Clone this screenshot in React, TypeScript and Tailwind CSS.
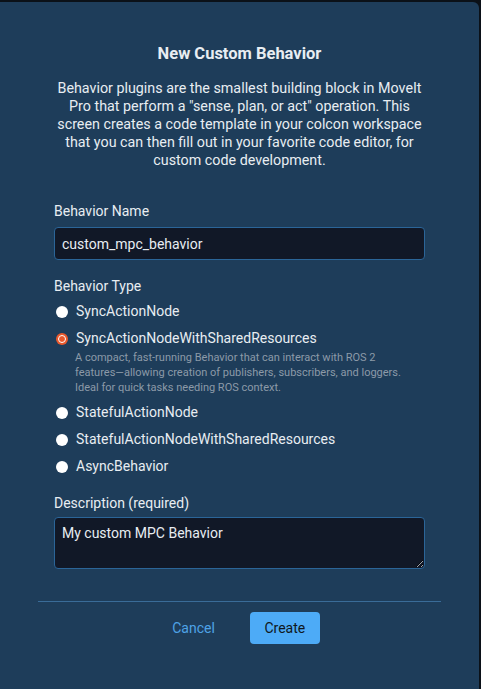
import { useState } from "react";

const TYPES = [
  "SyncActionNode",
  "SyncActionNodeWithSharedResources",
  "StatefulActionNode",
  "StatefulActionNodeWithSharedResources",
  "AsyncBehavior",
];

export default function App() {
  const [selected, setSelected] = useState(TYPES[1]);
  const [name, setName] = useState("custom_mpc_behavior");
  const [desc, setDesc] = useState("My custom MPC Behavior");

  return (
    <div
      className="min-h-[689px] bg-[#0b1118] pt-[2px] pr-[2px]"
      style={{ fontFamily: "Roboto, 'Liberation Sans', sans-serif" }}
    >
      <div className="min-h-[687px] bg-[#1e3d5a] rounded-tr-md text-[#e8edf2]">
        <div className="px-[54px] pt-[40px]">
          <h2 className="text-center text-[16.5px] font-bold leading-6">New Custom Behavior</h2>
          <p className="mt-[13px] text-center text-[14.3px] leading-[18px]">
            Behavior plugins are the smallest building block in MoveIt Pro that perform a "sense,
            plan, or act" operation. This screen creates a code template in your colcon workspace
            that you can then fill out in your favorite code editor, for custom code development.
          </p>

          {/* Name */}
          <label className="mt-[33px] block text-[14px] leading-[18px]">Behavior Name</label>
          <input
            value={name}
            onChange={(e) => setName(e.target.value)}
            className="mt-[7px] block h-[33px] w-full rounded-[4px] border border-[#2b6598] bg-[#111827] px-[7px] text-[14px] text-[#e8edf2] outline-none"
          />

          {/* Type */}
          <div className="mt-[17px] text-[14px] leading-[18px]">Behavior Type</div>
          <div className="mt-[3px]">
            {TYPES.map((t) => {
              const on = t === selected;
              return (
                <div key={t}>
                  <label
                    className="flex h-[27px] cursor-pointer items-center gap-[8px] pl-[2px] text-[14px]"
                    onClick={() => setSelected(t)}
                  >
                    {on ? (
                      <span className="flex h-[12px] w-[12px] items-center justify-center rounded-full bg-[#e8582c]">
                        <span className="h-[8px] w-[8px] rounded-full border-[1.5px] border-white bg-[#e8582c]" />
                      </span>
                    ) : (
                      <span className="h-[12px] w-[12px] rounded-full bg-white" />
                    )}
                    <span>{t}</span>
                  </label>
                  {on && (
                    <p className="-mt-[2px] mb-[4px] pl-[21px] pr-[20px] text-[11px] leading-[15px] text-[#8c9aa8]">
                      A compact, fast-running Behavior that can interact with ROS 2 features—allowing
                      creation of publishers, subscribers, and loggers. Ideal for quick tasks needing
                      ROS context.
                    </p>
                  )}
                </div>
              );
            })}
          </div>

          {/* Description */}
          <label className="mt-[14px] block text-[14px] leading-[18px]">Description (required)</label>
          <textarea
            value={desc}
            onChange={(e) => setDesc(e.target.value)}
            className="mt-[5px] block h-[52px] w-full resize-y rounded-[4px] border border-[#2b6598] bg-[#111827] px-[7px] py-[6px] text-[14px] leading-[18px] text-[#e8edf2] outline-none"
          />
        </div>

        <div className="mx-[38px] mt-[32px] border-t border-[#3a6c98]" />

        <div className="mt-[10px] flex items-center justify-center gap-[29px] pl-[7px]">
          <button className="px-[6px] text-[14px] text-[#4ea3e6]">Cancel</button>
          <button className="h-[32px] w-[70px] rounded-[4px] bg-[#4dabf7] text-[14px] text-[#0f1720]">
            Create
          </button>
        </div>
      </div>
    </div>
  );
}
